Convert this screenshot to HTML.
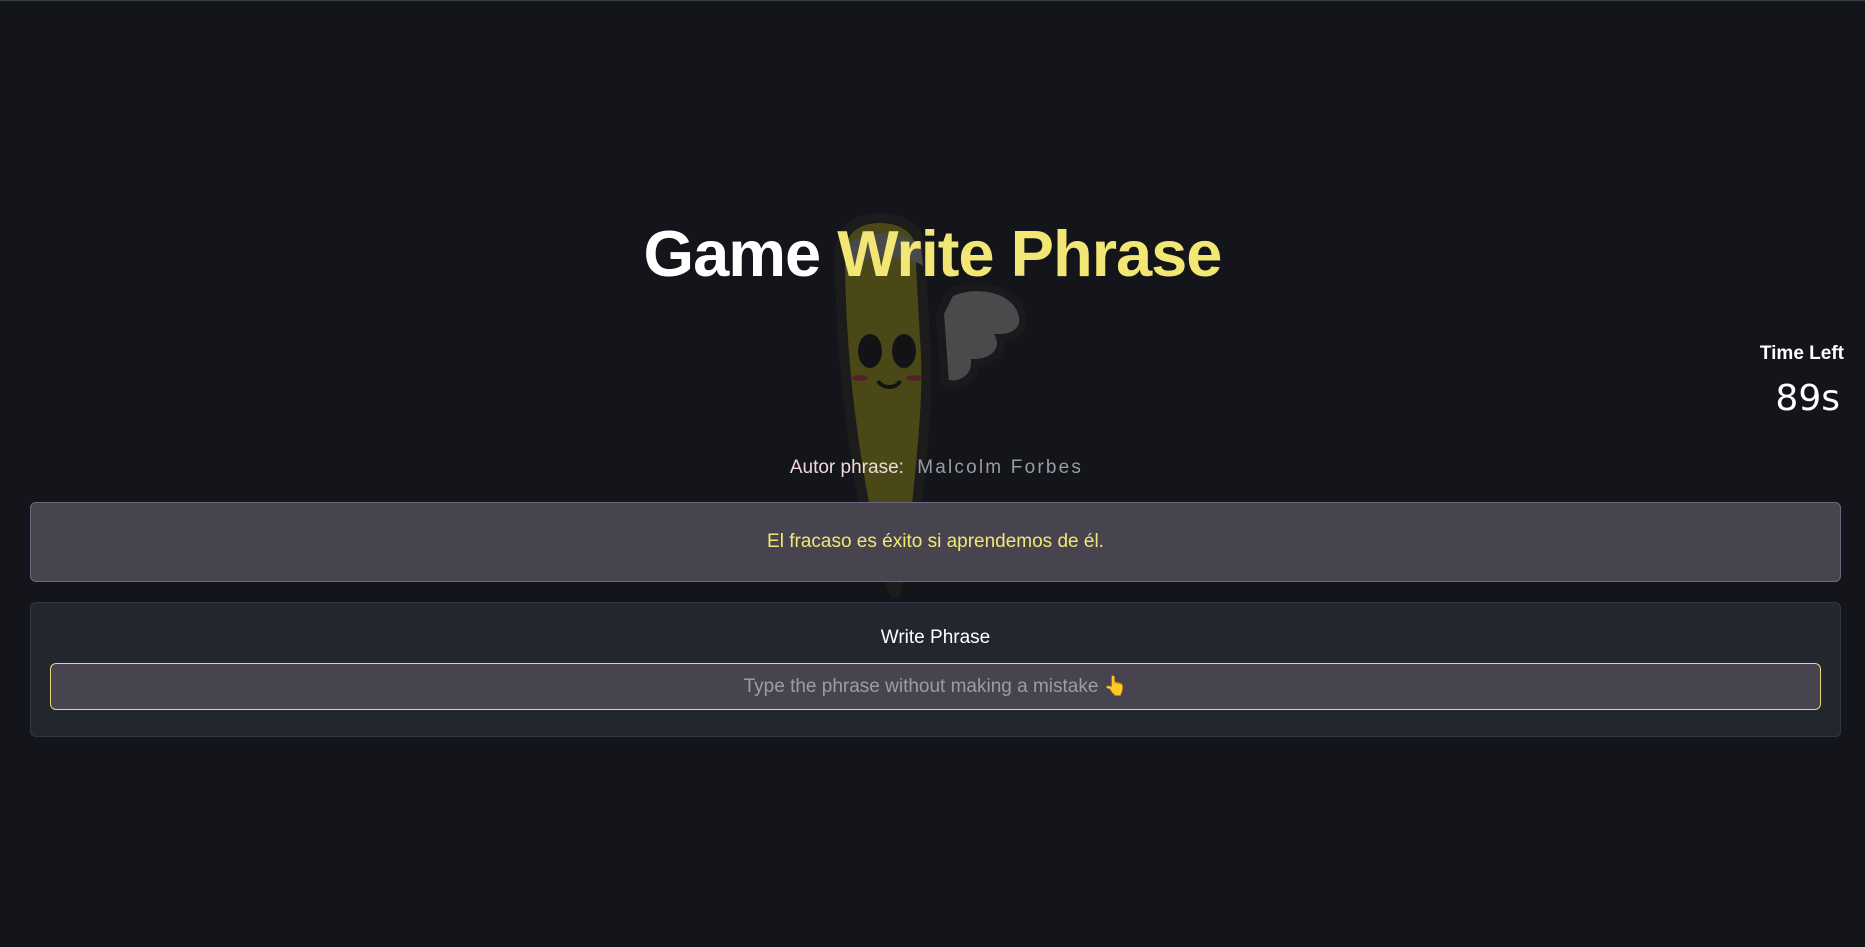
<!DOCTYPE html>
<html><head><meta charset="utf-8"><style>
html,body{margin:0;padding:0;}
body{width:1865px;height:947px;background:#14151a;border-top:1px solid #3a3c44;box-sizing:border-box;position:relative;overflow:hidden;font-family:"Liberation Sans",sans-serif;}
.abs{position:absolute;}
h1{position:absolute;left:0;width:1865px;top:213px;margin:0;text-align:center;font-size:65px;font-weight:bold;color:#fff;line-height:80px;letter-spacing:-1px;}
h1 span{color:#f2e774;}
.tl{right:21px;top:342px;color:#fff;font-weight:bold;font-size:19px;}
.ts{right:25px;top:377px;color:#fff;font-size:36px;font-family:"DejaVu Sans",sans-serif;}
.autor{left:4px;width:1865px;top:456px;text-align:center;font-size:19px;color:#eed9d9;}
.autor b{font-weight:normal;color:#9a9ca4;letter-spacing:2.2px;margin-left:8px;}
.box1{left:30px;width:1809px;top:501px;height:78px;background:#47444f;border:1px solid #6d6880;border-radius:6px;}
.box1 p{margin:0;text-align:center;line-height:78px;color:#f2e774;font-size:19px;}
.box2{left:30px;width:1809px;top:601px;height:133px;background:#22262e;border:1px solid #33373f;border-radius:6px;}
.wp{left:0;width:100%;top:24px;text-align:center;color:#fff;font-size:19px;}
.inp{left:19px;right:19px;top:60px;height:45px;background:#47444f;border:1px solid #e8d86c;border-radius:6px;text-align:center;line-height:45px;color:#9a9ca8;font-size:19px;}
</style></head><body>
<svg class="abs" style="left:820px;top:212px" width="230" height="385" viewBox="0 0 230 385" opacity="0.45">
<path d="M130 80c25-12 60-5 70 15c10 20-5 30-20 30c5 15-10 25-25 25c0 15-15 25-30 20l-5-70z" fill="#8a8a8a" stroke="#222" stroke-width="8"/>
<path d="M20 40c0-25 20-35 40-35s40 10 40 30l5 90c5 60-5 130-10 190l-20 65l-25-60c-15-70-30-170-30-280z" fill="#8a8712" stroke="#2a2520" stroke-width="10"/>
<path d="M25 55c20-15 60-15 78-2l-2-20c-15-15-55-18-75 0z" fill="#888"/>
<ellipse cx="50" cy="138" rx="12" ry="17" fill="#111"/><ellipse cx="84" cy="138" rx="12" ry="17" fill="#111"/>
<ellipse cx="40" cy="165" rx="8" ry="3" fill="#a33"/><ellipse cx="94" cy="165" rx="8" ry="3" fill="#a33"/>
<path d="M58 168c5 8 18 8 22 0" stroke="#111" stroke-width="4" fill="none"/>
<path d="M60 330l30 0l-10 40z" fill="#b9a8a8"/>
</svg>
<h1>Game <span>Write Phrase</span></h1>
<div class="abs tl">Time Left</div>
<div class="abs ts">89s</div>
<div class="abs autor">Autor phrase: <b>Malcolm Forbes</b></div>
<div class="abs box1"><p>El fracaso es éxito si aprendemos de él.</p></div>
<div class="abs box2"><div class="abs wp">Write Phrase</div><div class="abs inp">Type the phrase without making a mistake 👆</div></div>
</body></html>
